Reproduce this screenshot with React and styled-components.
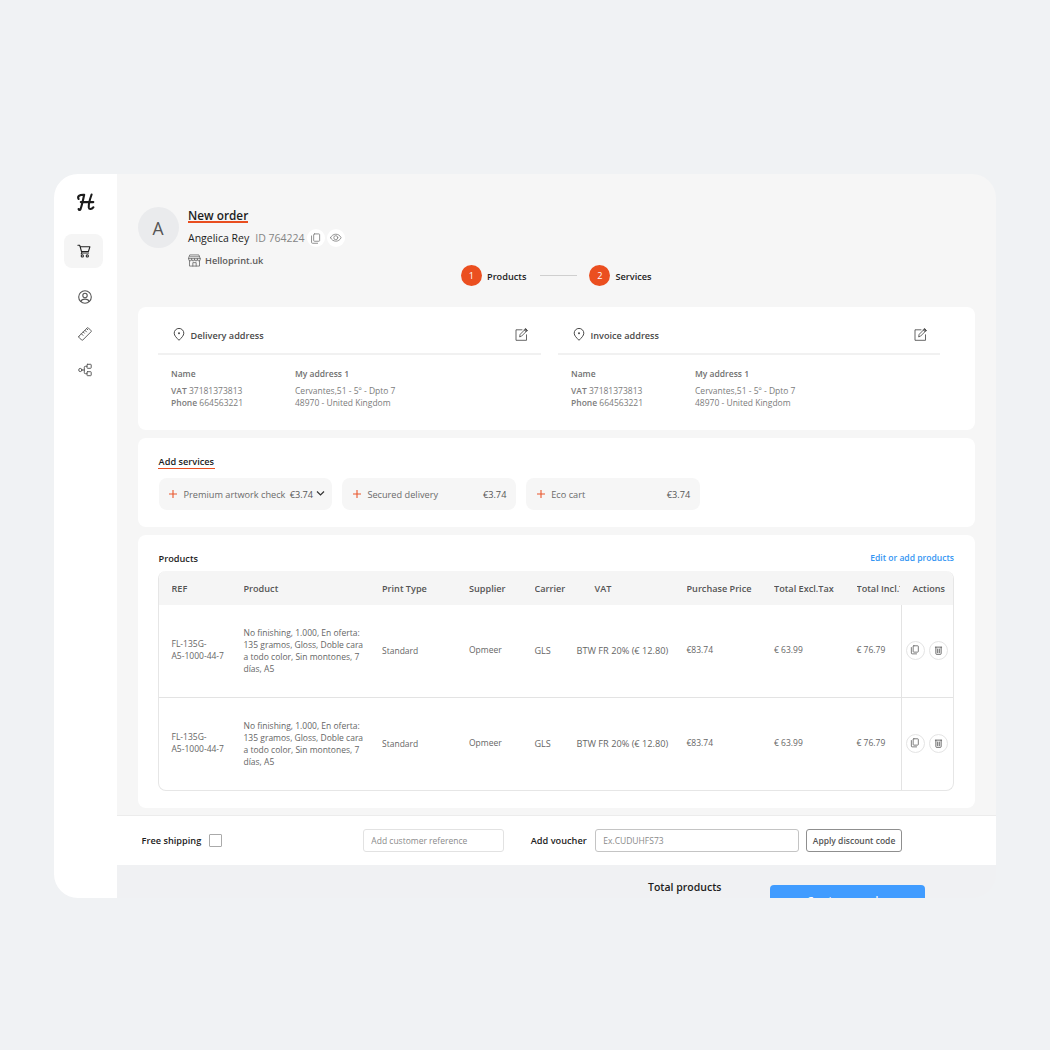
import React from "react";
import styled, { createGlobalStyle } from "styled-components";

const Global = createGlobalStyle`
  * { box-sizing: border-box; }
  body { margin: 0; background: #f0f2f4; font-family: "Open Sans", "Noto Sans", sans-serif; }
  button, input { font-family: inherit; }
`;

const Page = styled.div`
  width: 1050px;
  height: 1050px;
  padding: 174px 54px 0;
  background: #f0f2f4;
`;

const Window = styled.div`
  display: flex;
  width: 942px;
  height: 724px;
  border-radius: 24px;
  overflow: hidden;
  background: #f0f1f3;
`;

const Sidebar = styled.nav`
  width: 63px;
  flex: none;
  background: #fff;
  display: flex;
  flex-direction: column;
  align-items: center;
  padding: 17px 2px 0 0;
`;

const Logo = styled.svg`
  width: 20px;
  height: 22px;
  margin: 0 0 21px 3px;
`;

const NavItem = styled.a`
  display: flex;
  align-items: center;
  justify-content: center;
  width: 39px;
  height: ${(p) => (p.$active ? 34 : 36.7)}px;
  margin-bottom: ${(p) => (p.$active ? 10.5 : 0)}px;
  margin-left: ${(p) => (p.$active ? 0 : 2)}px;
  margin-right: ${(p) => (p.$active ? 2 : 1)}px;
  border-radius: 8px;
  background: ${(p) => (p.$active ? "#f5f5f5" : "transparent")};
  color: ${(p) => (p.$active ? "#222" : "#555")};
`;

const Main = styled.main`
  flex: 1;
  min-width: 0;
  display: flex;
  flex-direction: column;
`;

const Content = styled.div`
  height: 641px;
  padding: 33px 21px 0;
  background: #f6f6f6;
`;

const Identity = styled.header`
  display: flex;
  gap: 9px;
  height: 58px;
`;

const Avatar = styled.div`
  width: 41px;
  height: 41px;
  padding-right: 1px;
  border-radius: 50%;
  background: #eaebed;
  color: #555;
  font-size: 17.5px;
  line-height: 43px;
  text-align: center;
`;

const IdentityText = styled.div`
  display: flex;
  flex-direction: column;
  align-items: flex-start;
  color: #1d1d1d;
`;

const Title = styled.h1`
  margin: 0 0 6px;
  height: 16px;
  border-bottom: 2px solid #e94e1f;
  font-size: 11.8px;
  line-height: 17px;
  font-weight: 600;
  white-space: nowrap;
`;

const PersonLine = styled.div`
  display: flex;
  align-items: center;
  height: 19px;
  font-size: 10.5px;
  font-weight: 500;
  white-space: nowrap;
`;

const Muted = styled.span`
  margin: 0 2px 0 6px;
  color: #858585;
  font-weight: 400;
`;

const RoundIcon = styled.span`
  display: flex;
  align-items: center;
  justify-content: center;
  width: ${(p) => p.$size || 18}px;
  height: ${(p) => p.$size || 18}px;
  flex: none;
  margin-right: 2px;
  border-radius: 50%;
  border: ${(p) => (p.$outlined ? "1px solid #e4e4e4" : "0")};
  background: #fff;
  color: ${(p) => (p.$outlined ? "#5c5c5c" : "#888")};
`;

const ShopLine = styled.div`
  display: flex;
  align-items: center;
  gap: 4px;
  height: 18px;
  flex: none;
  margin-top: 3px;
  padding-top: 2px;
  color: #5a5a5a;
  font-size: 9.2px;
  font-weight: 600;
`;

const Stepper = styled.div`
  display: flex;
  align-items: center;
  height: 21px;
  margin-bottom: 21px;
  padding-left: 323px;
  color: #1d1d1d;
  font-size: 9.2px;
  font-weight: 600;
`;

const StepDot = styled.span`
  width: 21px;
  height: 21px;
  margin-right: 5px;
  border-radius: 50%;
  background: #eb4f20;
  color: #fff;
  font-weight: 400;
  line-height: 21px;
  text-align: center;
`;

const StepName = styled.span`
  padding-top: 1px;
`;

const StepLine = styled.span`
  width: 37px;
  height: 1px;
  margin: 0 12px 0 14px;
  background: #cfcfcf;
`;

const Card = styled.section`
  height: ${(p) => p.$height}px;
  margin-bottom: 8px;
  padding: 0 20px;
  border-radius: 8px;
  background: #fff;
`;

const Addresses = styled(Card)`
  display: grid;
  grid-template-columns: 383px 382px;
  gap: 17px;
`;

const AddressHead = styled.div`
  display: flex;
  align-items: center;
  height: 48px;
  padding: 9px 13px 0 15px;
  border-bottom: 2px solid #f1f1f1;
  color: #4a4a4a;
  font-size: 9.15px;
  font-weight: 600;
  > span { flex: 1; margin: 2px 0 0 5.5px; }
`;

const AddressBody = styled.div`
  display: grid;
  grid-template-columns: 124px 1fr;
  padding: 12px 0 0 13px;
  color: #7c7c7c;
  font-size: 8.5px;
  line-height: 12px;
  b { font-weight: 600; }
`;

const AddressLabel = styled.div`
  height: 18px;
  line-height: 13px;
  color: #707070;
  font-weight: 600;
`;

const SectionTitle = styled.h2`
  display: inline-block;
  margin: 0;
  color: #1d1d1d;
  font-size: 9.2px;
  font-weight: 600;
  line-height: 13px;
  white-space: nowrap;
`;

const ServicesTitle = styled(SectionTitle)`
  display: block;
  width: 57px;
  height: 14px;
  padding-left: 0.6px;
  border-bottom: 1.5px solid #e94e1f;
`;

const ServicesCard = styled(Card)`
  padding-top: 17px;
`;

const ServiceList = styled.div`
  display: flex;
  gap: 10.3px;
  margin: 9px 0 0 0.5px;
`;

const Service = styled.button`
  display: flex;
  align-items: center;
  width: 173.6px;
  height: 32px;
  padding: 0 ${(p) => (p.$menu ? 7 : 9.6)}px 0 9.6px;
  border: 0;
  border-radius: 8px;
  background: #f6f6f6;
  color: #6a6a6a;
  font-size: 9.2px;
  white-space: nowrap;
  > svg { flex: none; margin-bottom: 1px; }
`;

const ServiceName = styled.span`
  flex: 1;
  margin-left: 5.4px;
  text-align: left;
`;

const Price = styled.span`
  margin-right: ${(p) => (p.$menu ? 3 : 0)}px;
  color: #555;
`;

const ProductsCard = styled(Card)`
  margin-bottom: 0;
  padding-top: 16px;
`;

const ProductsHead = styled.div`
  display: flex;
  justify-content: space-between;
  height: 20px;
  padding: 0.5px 1px 0 0.6px;
`;

const Link = styled.a`
  color: #3395f3;
  font-size: 8.55px;
  font-weight: 600;
  line-height: 13px;
`;

const Table = styled.div`
  width: 796px;
  border: 1px solid #e6e6e6;
  border-top: 0;
  border-radius: 8px;
  overflow: hidden;
`;

const Row = styled.div`
  display: grid;
  grid-template-columns: 72px 138.5px 87px 65.5px 42px 110px 87.5px 82.5px 44px 53px;
  align-items: center;
  height: 93px;
  padding-left: 12.5px;
  border-top: 1px solid #e3e3e3;
  color: #666;
  font-size: 8.5px;
  line-height: 12px;
  white-space: nowrap;
`;

const HeadRow = styled(Row)`
  height: 33px;
  border-top: 0;
  background: #f5f5f5;
  color: #555;
  font-size: 9.15px;
  font-weight: 600;
  & + ${Row} { border-top-color: #f5f5f5; }
`;

const HeadCell = styled.div`
  margin-right: 1px;
  padding-left: ${(p) => p.$indent || 0}px;
  padding-top: 2px;
  overflow: hidden;
`;

const Cell = styled.div`
  padding-bottom: ${(p) => (p.$high ? 1.5 : 0)}px;
  font-size: ${(p) => p.$size || 8.5}px;
  white-space: pre-line;
`;

const Actions = styled.div`
  display: flex;
  align-items: center;
  align-self: stretch;
  gap: 2px;
  padding: 0 0 2px 4px;
  border-left: 1px solid #e3e3e3;
`;

const Footer = styled.footer`
  display: flex;
  align-items: center;
  height: 50px;
  padding-left: 24.6px;
  border-top: 1px solid #ececec;
  background: #fff;
  color: #1d1d1d;
  font-size: 9.2px;
  font-weight: 600;
  white-space: nowrap;
`;

const Checkbox = styled.span`
  width: 13px;
  height: 13px;
  margin: 0 141px 0 7.5px;
  border: 1px solid #aaa;
  border-radius: 1px;
`;

const Field = styled.input`
  width: ${(p) => p.$width}px;
  height: 23px;
  padding: 0 7px 1px 7.6px;
  border: 1px solid ${(p) => (p.$strong ? "#c4c4c4" : "#e2e2e2")};
  border-radius: 3px;
  background: #fff;
  font-size: 8.5px;
  &::placeholder { color: #8a8a8a; opacity: 1; }
`;

const VoucherLabel = styled.label`
  margin: 0 8px 0 27px;
`;

const Apply = styled.button`
  width: 96px;
  height: 23px;
  margin-left: 7.4px;
  padding: 0 0 1px;
  border: 1px solid #8f8f8f;
  border-radius: 3px;
  background: #fff;
  color: #555;
  font-size: 8.5px;
  font-weight: 600;
`;

const Summary = styled.div`
  display: flex;
  align-items: flex-start;
  justify-content: space-between;
  height: 33px;
  padding: 15px 71px 0 531px;
  overflow: hidden;
  color: #1d1d1d;
  font-size: 10.5px;
  font-weight: 600;
`;

const Create = styled.button`
  width: 155px;
  height: 29px;
  flex: none;
  margin-top: 5px;
  padding: 0;
  border: 0;
  border-radius: 4px 4px 0 0;
  background: #409cff;
  color: #fff;
  font-size: 9.6px;
  font-weight: 600;
`;

const Icon = ({ size = 14, box = 14, width = 1, children }) => (
  <svg width={size} height={size} viewBox={`0 0 ${box} ${box}`} fill="none" stroke="currentColor"
    strokeWidth={width} strokeLinecap="round" strokeLinejoin="round">{children}</svg>
);

const CartIcon = () => (
  <Icon width={1.1}>
    <path d="M.9 1.200h1.700l.6 1.600 1.700 6.200h6.700M3.200 2.800h9.700l-1.500 4.700H4.500M4.200 9.800l.7-.8" />
    <circle cx="5.300" cy="11.900" r="1.100" /><circle cx="10.300" cy="11.900" r="1.100" />
  </Icon>
);
const UserIcon = () => (
  <Icon width={1.1}>
    <circle cx="7" cy="7" r="6.3" /><circle cx="7" cy="5.5" r="2.2" />
    <path d="M2.9 11.5c.5-1.8 2-2.4 4.1-2.4s3.6.6 4.1 2.4" />
  </Icon>
);
const RulerIcon = () => (
  <Icon width={0.95}>
    <path d="M.9 9.3 9.3.9q.5-.5 1 0l2.800 2.800q.5.5 0 1L4.700 13.100q-.5.5-1 0L.9 10.300q-.5-.5 0-1zM3.500 6.900l1.500 1.500M5.300 5.100l1.100 1.100M7 3.400l1.500 1.500M8.700 1.700l1.100 1.100" />
  </Icon>
);
const FlowIcon = () => (
  <Icon width={0.95}>
    <circle cx="2.3" cy="7" r="1.6" />
    <rect x="9" y="1.3" width="4.2" height="4" rx=".6" />
    <rect x="9" y="8.7" width="4.2" height="4" rx=".6" />
    <path d="M3.9 7h2.400M9 3.300H7.300q-1 0-1 1v5.400q0 1 1 1H9" />
  </Icon>
);
const CopyIcon = ({ size }) => (
  <Icon size={size} box={12}>
    <rect x="4" y="1" width="6.5" height="8" rx=".8" />
    <path d="M1.700 3.200v7q0 1 1 1h5.600" />
  </Icon>
);
const EyeIcon = () => (
  <Icon size={12} box={12} width={0.9}>
    <path d="M.5 5.700C2.600 1 9 1 11.100 5.700 9 10.400 2.600 10.400.5 5.700z" />
    <circle cx="5.8" cy="5.7" r="2" />
  </Icon>
);
const TrashIcon = () => (
  <Icon size={9} box={12} width={1.2}>
    <path d="M1.800 1.500h8.400M2.500 1.700v8.600q0 .8.8.8h5.400q.8 0 .8-.8V1.700M4.900 4v4.900M7.100 4v4.900" />
  </Icon>
);
const ShopIcon = () => (
  <Icon size={13} box={14} width={0.8}>
    <path d="M2.300 1h9.400l1.500 4H.8zM1.600 7.400V13h10.800V7.400M5.200 13V9.300h3.600V13M2 3h10M.8 5v1.100q0 1.300 1.500 1.300T3.900 6.100V5M3.900 6.100q0 1.300 1.600 1.300T7 6.100V5M7 6.100q0 1.300 1.600 1.300t1.500-1.300V5M10.100 6.100q0 1.300 1.600 1.300t1.500-1.300V5" />
  </Icon>
);
const PinIcon = () => (
  <svg width="12" height="13" viewBox="0 0 12 13" fill="none" stroke="currentColor">
    <path d="M6 12.300C3.600 9.800 1.200 7.700 1.200 5.200a4.800 4.800 0 0 1 9.600 0c0 2.500-2.400 4.600-4.800 7.100z" />
    <circle cx="6" cy="5.300" r="1" fill="currentColor" stroke="none" />
  </svg>
);
const EditIcon = () => (
  <Icon size={13} box={13} width={0.85}>
    <path d="M7 1.800H1v10.500h10.500V6.800M4.700 8.500l.5-2.200 5.500-5.500 1.600 1.600-5.500 5.500zM9.400 2.100 11 3.700" />
    <path d="m10.700.8 1.600 1.600-.7.700-1.600-1.600z" fill="currentColor" />
  </Icon>
);
const PlusIcon = () => (
  <svg width="10" height="10" viewBox="0 0 10 10" stroke="#e9572c" strokeWidth="1.1"><path d="M1 5h8M5 1v8" /></svg>
);
const ChevronIcon = () => (
  <svg width="9" height="7" viewBox="0 0 9 7" fill="none" stroke="#333" strokeWidth="1.2"><path d="m1 1.500 3.500 3.500L8 1.500" /></svg>
);

const Address = ({ title }) => (
  <div>
    <AddressHead><PinIcon /><span>{title}</span><EditIcon /></AddressHead>
    <AddressBody>
      <div>
        <AddressLabel>Name</AddressLabel>
        <div><b>VAT</b> 37181373813</div>
        <div><b>Phone</b> 664563221</div>
      </div>
      <div>
        <AddressLabel>My address 1</AddressLabel>
        <div>Cervantes,51 - 5º - Dpto 7</div>
        <div>48970 - United Kingdom</div>
      </div>
    </AddressBody>
  </div>
);

const services = [
  { name: "Premium artwork check", menu: true },
  { name: "Secured delivery" },
  { name: "Eco cart" },
];

const columns = ["REF", "Product", "Print Type", "Supplier", "Carrier", "VAT", "Purchase Price", "Total Excl.Tax", "Total Incl.Tax"];

const ProductRow = () => (
  <Row>
    <Cell $high>{"FL-135G-\nA5-1000-44-7"}</Cell>
    <Cell>{"No finishing, 1.000, En oferta:\n135 gramos, Gloss, Doble cara\na todo color, Sin montones, 7\ndías, A5"}</Cell>
    <Cell>Standard</Cell>
    <Cell $high>Opmeer</Cell>
    <Cell $size={9.1}>GLS</Cell>
    <Cell $size={9.2}>BTW FR 20% (€ 12.80)</Cell>
    <Cell $high>€83.74</Cell>
    <Cell $high>€ 63.99</Cell>
    <Cell $high>€ 76.79</Cell>
    <Actions>
      <RoundIcon $outlined $size={19}><CopyIcon size={9.5} /></RoundIcon>
      <RoundIcon $outlined $size={19}><TrashIcon /></RoundIcon>
    </Actions>
  </Row>
);

export default function App() {
  return (
    <>
      <Global />
      <Page>
        <Window>
          <Sidebar>
            <Logo viewBox="0 0 20 22" fill="none" stroke="#1c1c1c" strokeWidth="2.1" strokeLinecap="round" strokeLinejoin="round">
              <path d="M2.600 8C1.200 5.600 3 3.500 8.200 3.700 7.200 8 6.200 13.500 4.600 18c-.5 1.300-1.700 1.200-2 .1" />
              <path d="M15.600 3.500c-1.800 5-3.200 10-2.800 13 .4 2.300 2.900 1.700 4.600-.2M4.800 11.100h12.500" />
            </Logo>
            <NavItem $active><CartIcon /></NavItem>
            <NavItem><UserIcon /></NavItem>
            <NavItem><RulerIcon /></NavItem>
            <NavItem><FlowIcon /></NavItem>
          </Sidebar>
          <Main>
            <Content>
              <Identity>
                <Avatar>A</Avatar>
                <IdentityText>
                  <Title>New order</Title>
                  <PersonLine>
                    Angelica Rey<Muted>ID 764224</Muted>
                    <RoundIcon><CopyIcon size={11} /></RoundIcon>
                    <RoundIcon><EyeIcon /></RoundIcon>
                  </PersonLine>
                  <ShopLine><ShopIcon />Helloprint.uk</ShopLine>
                </IdentityText>
              </Identity>
              <Stepper>
                <StepDot>1</StepDot><StepName>Products</StepName>
                <StepLine />
                <StepDot>2</StepDot><StepName>Services</StepName>
              </Stepper>
              <Addresses $height={123}>
                <Address title="Delivery address" />
                <Address title="Invoice address" />
              </Addresses>
              <ServicesCard $height={89}>
                <ServicesTitle>Add services</ServicesTitle>
                <ServiceList>
                  {services.map((s) => (
                    <Service key={s.name} $menu={s.menu}>
                      <PlusIcon />
                      <ServiceName>{s.name}</ServiceName>
                      <Price $menu={s.menu}>€3.74</Price>
                      {s.menu && <ChevronIcon />}
                    </Service>
                  ))}
                </ServiceList>
              </ServicesCard>
              <ProductsCard $height={273}>
                <ProductsHead>
                  <SectionTitle>Products</SectionTitle>
                  <Link>Edit or add products</Link>
                </ProductsHead>
                <Table>
                  <HeadRow>
                    {columns.map((c) => <HeadCell key={c} $indent={c === "VAT" ? 18 : 0}>{c}</HeadCell>)}
                    <HeadCell $indent={12}>Actions</HeadCell>
                  </HeadRow>
                  <ProductRow />
                  <ProductRow />
                </Table>
              </ProductsCard>
            </Content>
            <Footer>
              Free shipping<Checkbox />
              <Field $width={141} placeholder="Add customer reference" />
              <VoucherLabel>Add voucher</VoucherLabel>
              <Field $width={204} $strong placeholder="Ex.CUDUHFS73" />
              <Apply>Apply discount code</Apply>
            </Footer>
            <Summary>
              Total products
              <Create>Create new order</Create>
            </Summary>
          </Main>
        </Window>
      </Page>
    </>
  );
}
